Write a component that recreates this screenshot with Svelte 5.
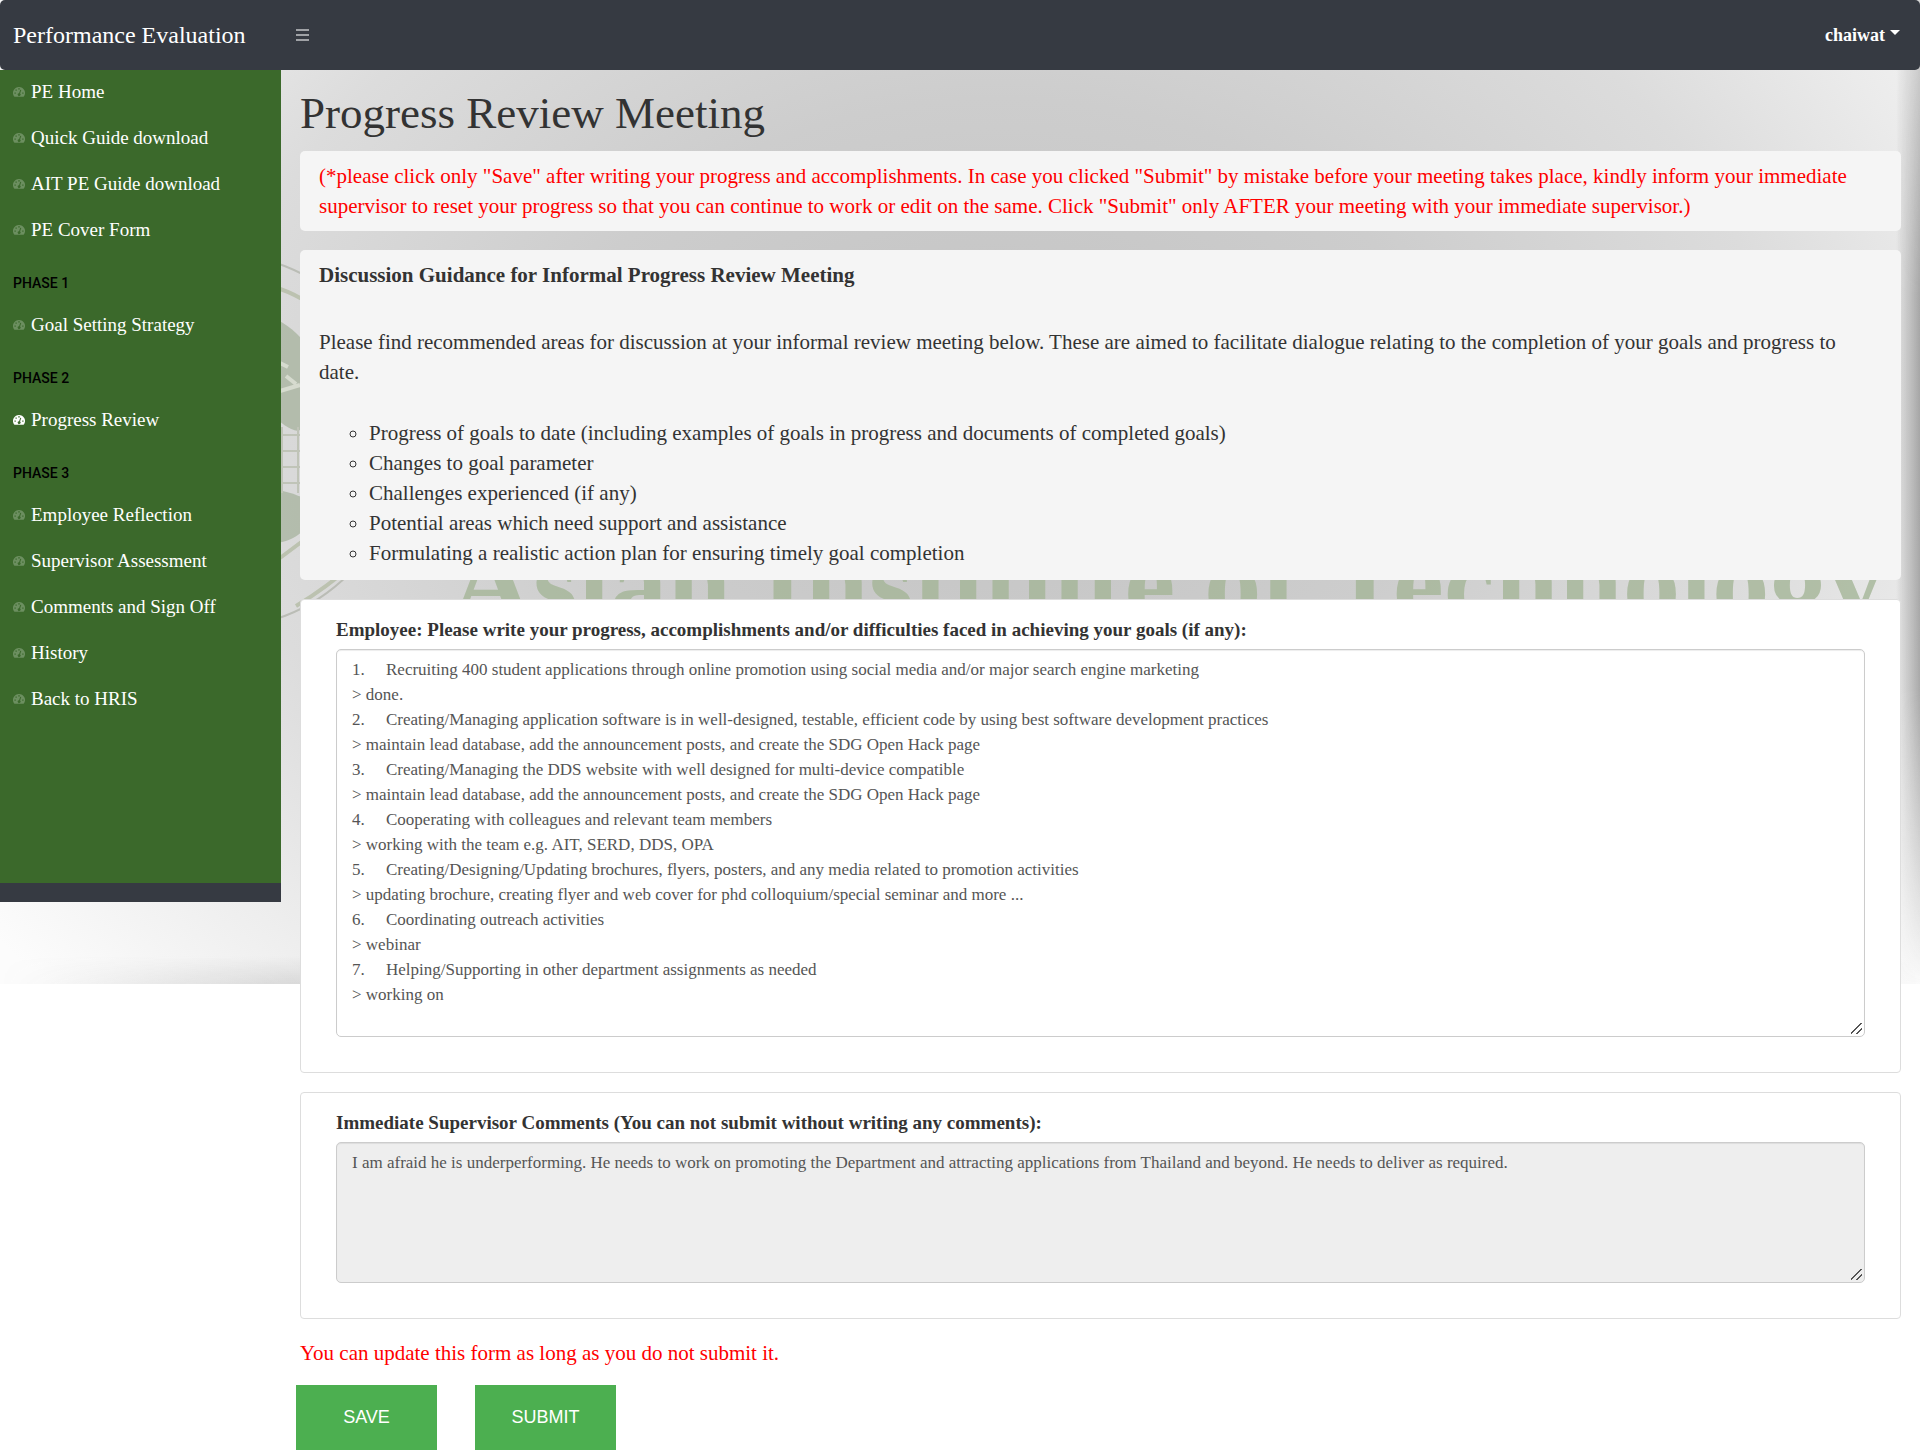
<script>
  const groups = [
    { title: '', items: ['PE Home', 'Quick Guide download', 'AIT PE Guide download', 'PE Cover Form'] },
    { title: 'Phase 1', items: ['Goal Setting Strategy'] },
    { title: 'Phase 2', items: ['Progress Review'] },
    { title: 'Phase 3', items: ['Employee Reflection', 'Supervisor Assessment', 'Comments and Sign Off', 'History', 'Back to HRIS'] }
  ];
  const current = 'Progress Review';
  const topics = [
    'Progress of goals to date (including examples of goals in progress and documents of completed goals)',
    'Changes to goal parameter',
    'Challenges experienced (if any)',
    'Potential areas which need support and assistance',
    'Formulating a realistic action plan for ensuring timely goal completion'
  ];
  let progress = $state([
    '1.\tRecruiting 400 student applications through online promotion using social media and/or major search engine marketing',
    '> done.',
    '2.\tCreating/Managing application software is in well-designed, testable, efficient code by using best software development practices',
    '> maintain lead database, add the announcement posts, and create the SDG Open Hack page',
    '3.\tCreating/Managing the DDS website with well designed for multi-device compatible',
    '> maintain lead database, add the announcement posts, and create the SDG Open Hack page',
    '4.\tCooperating with colleagues and relevant team members',
    '> working with the team e.g. AIT, SERD, DDS, OPA',
    '5.\tCreating/Designing/Updating brochures, flyers, posters, and any media related to promotion activities',
    '> updating brochure, creating flyer and web cover for phd colloquium/special seminar and more ...',
    '6.\tCoordinating outreach activities',
    '> webinar',
    '7.\tHelping/Supporting in other department assignments as needed',
    '> working on'
  ].join('\n'));
  const comments = 'I am afraid he is underperforming. He needs to work on promoting the Department and attracting applications from Thailand and beyond. He needs to deliver as required.';
</script>

<div class="page">
  <div class="backdrop" aria-hidden="true">
    <svg class="seal" viewBox="0 0 420 420">
      <g fill="none" stroke="#b3b6ad" stroke-width="2">
        <circle cx="210" cy="210" r="188" />
        <path d="M268 56q14 4 28 12M262 336l40-30M290 375q30-18 60-44" stroke="#b5bda6" stroke-width="4" />
      </g>
      <g fill="#aab6a2">
        <path d="M250 82c30 4 56 30 66 62 6 30-12 52-24 56-20-4-40-30-46-60z" />
        <path d="M250 258c20-2 50 6 60 18-4 20-20 34-40 36z" />
      </g>
      <path d="M270 130l12 6M280 145l10 8M274 160l20-6" stroke="#d6dccd" stroke-width="4" />
      <path d="M266 204h50M266 220h50M266 236h50M266 252h50M276 196v66M292 196v66" stroke="#babfb0" stroke-width="2" />
    </svg>
    <span class="wordmark">Asian Institute of Technology</span>
  </div>

  <header class="topbar">
    <a class="brand" href="#home">Performance Evaluation</a>
    <button class="toggle" type="button" aria-label="Toggle menu">
      <svg viewBox="0 0 13 12" width="13" height="12"><path d="M0 1h13M0 6h13M0 11h13" stroke="currentColor" stroke-width="2" /></svg>
    </button>
    <button class="user" type="button">chaiwat <span class="caret"></span></button>
  </header>

  <div class="columns">
    <nav class="sidebar">
      {#each groups as group}
        {#if group.title}<h2>{group.title}</h2>{/if}
        <ul>
          {#each group.items as item}
            <li>
              <a href="#{item}" class:active={item === current}>
                <svg viewBox="0 0 24 20" width="12" height="10">
                  <path fill="currentColor" fill-rule="evenodd" d="M12 0a12 12 0 0 0-10.400 18q.6 1.600 1.800 1.600h17.200q1.200 0 1.800-1.600A12 12 0 0 0 12 0zM10.500 2.400h3v2.400h-3zM5 5h2.500v2.500H5zM3 11h2.500v2.500H3zM18.500 11h2.500v2.500h-2.500zM14.500 5.500l2 .6-2.400 7a2.800 2.800 0 1 1-2-.7z" />
                </svg>
                <span>{item}</span>
              </a>
            </li>
          {/each}
        </ul>
      {/each}
    </nav>

    <main>
      <h1>Progress Review Meeting</h1>
      <p class="well notice">(*please click only "Save" after writing your progress and accomplishments. In case you clicked "Submit" by mistake before your meeting takes place, kindly inform your immediate supervisor to reset your progress so that you can continue to work or edit on the same. Click "Submit" only AFTER your meeting with your immediate supervisor.)</p>

      <section class="well guidance">
        <h3>Discussion Guidance for Informal Progress Review Meeting</h3>
        <p>Please find recommended areas for discussion at your informal review meeting below. These are aimed to facilitate dialogue relating to the completion of your goals and progress to date.</p>
        <ul>
          {#each topics as topic}<li>{topic}</li>{/each}
        </ul>
      </section>

      <form onsubmit={(e) => e.preventDefault()}>
        <div class="panel">
          <label for="progress">Employee: Please write your progress, accomplishments and/or difficulties faced in achieving your goals (if any):</label>
          <textarea id="progress" bind:value={progress}></textarea>
        </div>
        <div class="panel">
          <label for="comments">Immediate Supervisor Comments (You can not submit without writing any comments):</label>
          <textarea id="comments" rows="5" readonly value={comments}></textarea>
        </div>
        <p class="hint">You can update this form as long as you do not submit it.</p>
        <div class="actions">
          <button type="submit">SAVE</button>
          <button type="submit">SUBMIT</button>
        </div>
      </form>
    </main>
  </div>
</div>

<style>
  :global(body) {
    margin: 0;
    background: #fff;
  }
  .page, .page * {
    box-sizing: border-box;
  }
  .page {
    position: relative;
    color: #333;
    font-family: "Liberation Serif", "Times New Roman", serif;
    font-size: 21px;
    line-height: 30px;
  }
  .backdrop {
    position: absolute;
    inset: 0 0 auto;
    height: 984px;
    overflow: hidden;
    background: radial-gradient(ellipse 58% 80% at 52% 42%, #c2c2c2, #cdcdcd 40%, #dcdcdc 70%, #ebebeb 88%, #fcfcfc 112%);
  }
  .backdrop::before,
  .backdrop::after {
    content: "";
    position: absolute;
  }
  .backdrop::before {
    inset: 0 0 0 auto;
    width: 24px;
    background: linear-gradient(to left, rgb(70 70 70 / .4), rgb(120 120 120 / 0));
    mask-image: linear-gradient(rgb(0 0 0 / .4), #000 30%, #000 70%, transparent);
  }
  .backdrop::after {
    inset: auto 0 0;
    height: 28px;
    background: linear-gradient(to top, rgb(90 90 90 / .16), rgb(120 120 120 / 0));
    mask-image: linear-gradient(to right, transparent, #000 16%, #000 84%, transparent);
  }
  .seal {
    position: absolute;
    left: 6px;
    top: 231px;
    width: 420px;
    height: 420px;
    opacity: .8;
  }
  .wordmark {
    position: absolute;
    left: 450px;
    top: 525px;
    color: #a5b698;
    font-size: 115px;
    font-weight: 700;
    line-height: 116px;
    white-space: nowrap;
    opacity: .8;
  }
  .topbar {
    position: relative;
    display: flex;
    align-items: center;
    height: 70px;
    padding: 0 20px 0 13px;
    border-radius: 5px;
    background: #363a42;
  }
  .topbar button {
    border: 0;
    padding: 0;
    background: none;
    font-family: inherit;
  }
  .brand {
    width: 283px;
    color: #fff;
    font-size: 24px;
    text-decoration: none;
  }
  .toggle {
    display: flex;
    color: #a0a2a6;
  }
  .user {
    display: flex;
    align-items: center;
    gap: 5px;
    margin-left: auto;
    color: #fff;
    font-size: 18px;
    font-weight: 700;
  }
  .caret {
    margin-bottom: 5px;
    border: 5px solid transparent;
    border-top-color: #fff;
    border-bottom: 0;
  }
  .columns {
    position: relative;
    display: flex;
    align-items: flex-start;
  }
  .sidebar {
    flex: 0 0 281px;
    min-height: 832px;
    border-bottom: 19px solid #363a42;
    background: #3b692b;
  }
  .sidebar h2 {
    margin: 0;
    padding: 21px 13px 12px;
    color: #000;
    font: 500 14px/16px Roboto, sans-serif;
    text-transform: uppercase;
  }
  .sidebar ul {
    margin: 0;
    padding: 0;
    list-style: none;
  }
  .sidebar a {
    display: flex;
    align-items: center;
    gap: 6px;
    padding: 9px 13px 11px;
    color: #fff;
    font-size: 19px;
    line-height: 26px;
    text-decoration: none;
  }
  .sidebar svg {
    color: #6c8f60;
  }
  .sidebar .active svg {
    color: #fff;
  }
  main {
    flex: 1;
    min-width: 0;
    padding: 18px 19px 5px;
  }
  h1 {
    margin: 0 0 13px;
    font-size: 45px;
    font-weight: 400;
    line-height: 50px;
  }
  .well {
    margin: 0 0 19px;
    padding: 10px 19px;
    border-radius: 5px;
    background: #f5f5f5;
  }
  .notice {
    color: #f00;
  }
  .guidance {
    padding: 10px 24px 12px 19px;
  }
  .guidance h3 {
    margin: 0 0 37px;
    font-size: 21px;
    font-weight: 700;
  }
  .guidance p {
    margin: 0 0 31px;
  }
  .guidance ul {
    margin: 0;
    padding: 0 0 0 50px;
    list-style: circle;
  }
  .panel {
    margin-bottom: 19px;
    padding: 16px 35px 35px;
    border: 1px solid #ddd;
    border-radius: 4px;
    background: #fff;
  }
  label {
    display: block;
    margin-bottom: 6px;
    font-size: 19px;
    font-weight: 700;
    line-height: 27px;
  }
  textarea {
    display: block;
    width: 100%;
    padding: 7px 15px;
    border: 1px solid #ccc;
    border-radius: 5px;
    box-shadow: inset 0 1px 1px rgb(0 0 0 / .075);
    color: #555;
    background: #fff;
    font-family: inherit;
    font-size: 17px;
    line-height: 25px;
    tab-size: 8;
    resize: vertical;
  }
  textarea::-webkit-resizer {
    background: linear-gradient(135deg, transparent 45%, #555 45% 54%, transparent 54% 70%, #555 70% 79%, transparent 79%) 2px 2px / 11px 11px no-repeat;
  }
  #progress {
    height: 388px;
  }
  textarea[readonly] {
    background: #eee;
  }
  .hint {
    margin: 0 0 17px;
    color: #f00;
  }
  .actions {
    display: flex;
    gap: 38px;
    margin-left: -4px;
  }
  .actions button {
    min-width: 141px;
    padding: 20px 32px;
    border: 0;
    color: #fff;
    background: #4caf50;
    font: 18px/25px "Liberation Sans", Arial, sans-serif;
  }
</style>
